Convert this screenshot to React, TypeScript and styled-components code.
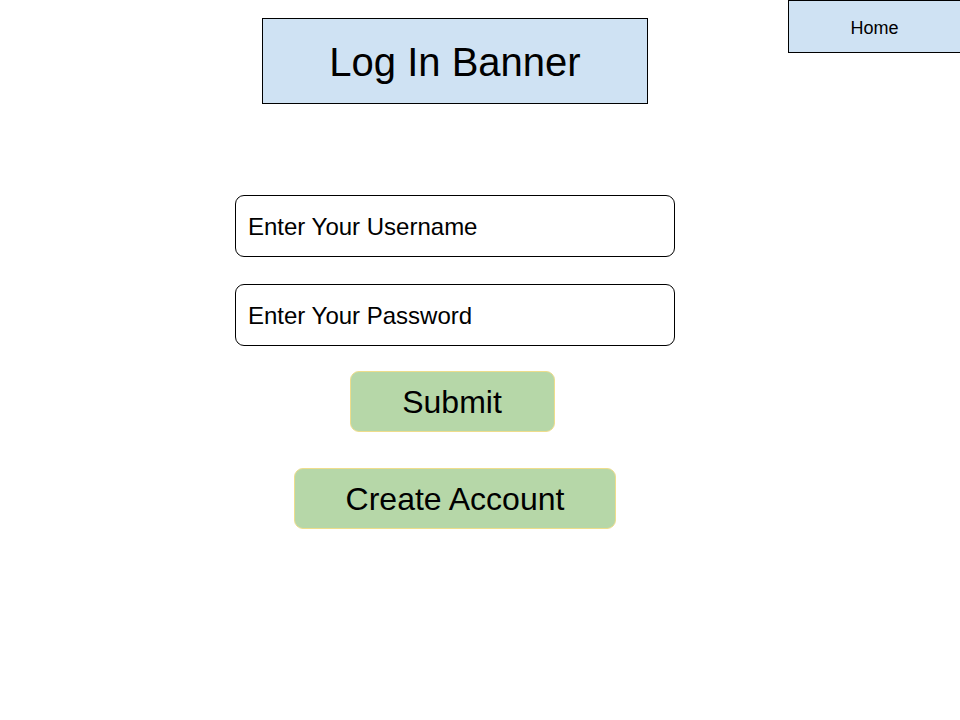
import React from 'react';
import styled, { createGlobalStyle } from 'styled-components';

const GlobalStyle = createGlobalStyle`
  html, body {
    margin: 0;
    padding: 0;
    background: #ffffff;
  }

  body {
    font-family: 'Liberation Sans', Arial, sans-serif;
    color: #000000;
  }
`;

const Page = styled.div`
  display: flex;
  align-items: flex-start;
  width: 960px;
  height: 720px;
  box-sizing: border-box;
`;

const Main = styled.main`
  display: flex;
  flex-direction: column;
  align-items: center;
  width: 440px;
  margin-left: 235px;
  padding-top: 18px;
`;

const Banner = styled.h1`
  box-sizing: border-box;
  display: flex;
  align-items: center;
  justify-content: center;
  width: 386px;
  height: 86px;
  margin: 0 0 91px;
  padding-top: 2px;
  background: #cfe2f3;
  border: 1px solid #000000;
  font-size: 40px;
  font-weight: 400;
`;

const Form = styled.form`
  display: flex;
  flex-direction: column;
  align-items: center;
  width: 100%;
`;

const Field = styled.input<{ $gap: number }>`
  box-sizing: border-box;
  width: 440px;
  height: 62px;
  margin-bottom: ${(p) => p.$gap}px;
  padding: 2px 12px 0;
  border: 1px solid #000000;
  border-radius: 9px;
  background: #ffffff;
  font-family: 'Liberation Sans', Arial, sans-serif;
  font-size: 24px;
  color: #000000;
  outline: none;

  &::placeholder {
    color: #000000;
    opacity: 1;
  }
`;

const GreenButton = styled.button<{ $width: number; $gap: number; $shift?: number }>`
  box-sizing: border-box;
  width: ${(p) => p.$width}px;
  height: 61px;
  margin-bottom: ${(p) => p.$gap}px;
  margin-left: ${(p) => (p.$shift ?? 0) * 2}px;
  padding-top: 3px;
  background: #b6d7a8;
  border: 1px solid #eedd8c;
  border-radius: 9px;
  font-family: 'Liberation Sans', Arial, sans-serif;
  font-size: 32px;
  color: #000000;
  cursor: pointer;
`;

const Nav = styled.nav`
  margin-left: auto;
`;

const HomeButton = styled.button`
  box-sizing: border-box;
  width: 173px;
  height: 53px;
  margin-right: -1px;
  padding-top: 4px;
  background: #cfe2f3;
  border: 1px solid #000000;
  font-family: 'Liberation Sans', Arial, sans-serif;
  font-size: 18px;
  color: #000000;
  cursor: pointer;
`;

const App = () => {
  return (
    <>
      <GlobalStyle />
      <Page>
        <Main>
          <Banner>Log In Banner</Banner>
          <Form onSubmit={(e) => e.preventDefault()}>
            <Field $gap={27} type="text" placeholder="Enter Your Username" />
            <Field $gap={25} type="password" placeholder="Enter Your Password" />
            <GreenButton $width={205} $gap={36} $shift={-3} type="submit">
              Submit
            </GreenButton>
            <GreenButton $width={322} $gap={0} type="button">
              Create Account
            </GreenButton>
          </Form>
        </Main>
        <Nav>
          <HomeButton type="button">Home</HomeButton>
        </Nav>
      </Page>
    </>
  );
};

export default App;
